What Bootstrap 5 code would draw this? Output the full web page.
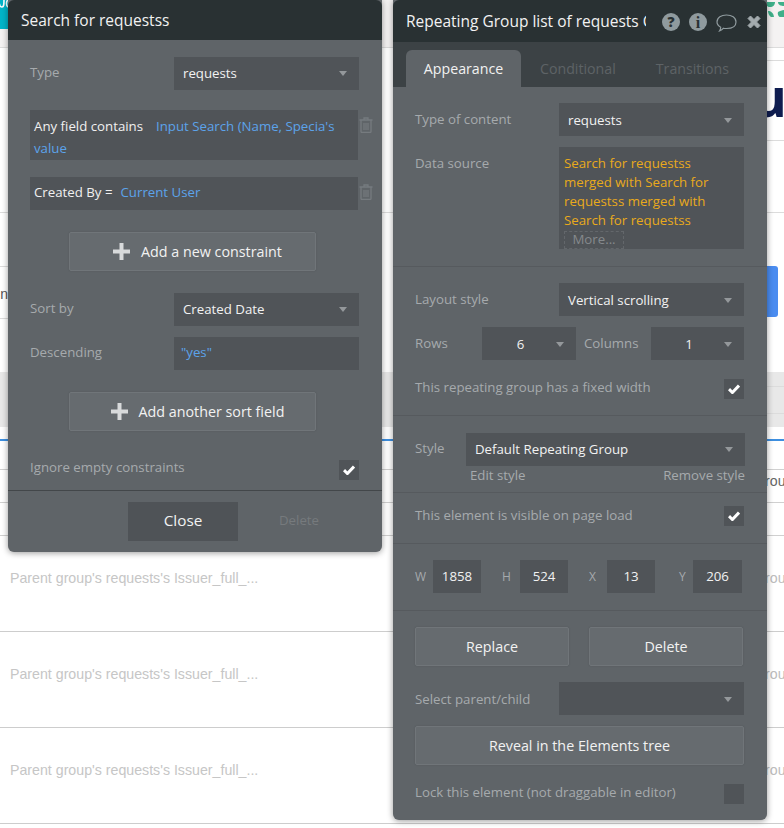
<!DOCTYPE html>
<html lang="en">
<head>
<meta charset="utf-8">
<title>Repeating Group editor</title>
<link href="https://cdn.jsdelivr.net/npm/bootstrap@5.3.0/dist/css/bootstrap.min.css" rel="stylesheet">
<style>
html,body{margin:0;height:828px;overflow:hidden;background:#fff}
body{font-family:"Open Sans",sans-serif;font-size:13.25px;color:#f0f0f0}
/* page behind */
.bk{position:relative;width:784px;height:828px;overflow:hidden;font-family:"Liberation Sans",sans-serif}
.bk-top{height:48px;background:#f4f2f2;border-bottom:1px solid #dcdcdc;overflow:hidden}
.bk-teal{width:8px;height:29px;background:#00b4c8}
.bk-green{width:18px;height:17px;top:0;right:0;overflow:hidden}
.bk-a{height:165px;border-bottom:1px solid #dcdcdc}
.bk-strip{width:17px;margin-left:auto}
.bk-l1{height:13px;border-bottom:1px solid #dcdcdc}
.bk-u{height:80px;border-bottom:1px solid #dcdcdc;color:#0e1c4f;font:700 54px/70px "Open Sans",sans-serif;overflow:hidden;white-space:nowrap;direction:rtl;padding-left:0}
.bk-u span{margin-right:-3px}
.bk-b{height:159px;padding-top:53px}
.bk-inp{width:8px;height:53px;border:1px solid #dcdcdc;border-width:1px 0;color:#555;font:14px/54px "Liberation Sans",sans-serif;overflow:hidden;direction:rtl}
.bk-blue{width:12px;height:51px;background:#4a8cf0;border-radius:0 3px 3px 0;margin-right:6px}
.bk-band{height:55px;background:#e8e8e8}
.bk-l2{height:15px;border-bottom:1px solid #dcdcdc}
.bk-l3{height:27px;border-bottom:1px solid #dcdcdc}
.bk-gap{height:12px}
.bk-bl{height:2px;background:#3d8fe0}
.bk-r1{height:29px;border-bottom:1px solid #d0d0d0}
.bk-r2{height:33px;border-bottom:1px solid #d0d0d0;white-space:nowrap;overflow:hidden;color:#555;font-size:14.2px;padding-top:1px}
.bk-r3{height:33px;border-bottom:1px solid #d0d0d0}
.bk-row{height:96px;border-bottom:1px solid #cdcdcd;padding-top:33px;white-space:nowrap;overflow:hidden;color:#c6c6c6;font-size:14.2px;line-height:18px}
.bk-lt{width:754px;padding-left:10px;flex:none}
.bk-r2 .bk-lt{color:transparent}
.bk-rt{color:#bcbcbc}
.bk-r2 .bk-rt{color:#666}
/* floating editor windows */
.pnl{position:absolute;top:0;width:374px;background:#5f6468;border-radius:0 0 6px 6px;box-shadow:0 1px 6px rgba(0,0,0,.4);overflow:hidden}
.pnl-s{left:8px;height:552px}
.pnl-r{left:393px;height:820px}
.hd{height:40px;background:#293133;display:flex;align-items:center;padding-left:13px;padding-top:2px;font-size:15.5px;color:#f2f2f2;border-radius:6px 6px 0 0}
.pnl-r .hd{height:42px;padding-top:0}
.ttl{width:240px;flex:none;overflow:hidden;white-space:nowrap;padding-top:2px}
.ics{margin-left:13px;flex:none}
.lbl{color:#a6aaad;line-height:18px}
.up1{margin-bottom:2px}.up2{margin-bottom:4px}.up3{margin-bottom:6px}
.fld{background:#505458;height:33px;padding:0 9px;display:flex;align-items:center;justify-content:space-between;white-space:nowrap;color:#f2f2f2}
.pnl-r .pr .fld,.pnl-r .pr-rows .fld{padding-top:2px}
.fld-y{padding-left:7px;padding-bottom:2px}
.car{width:0;height:0;border:4.5px solid transparent;border-top:5px solid #94989b;border-bottom:0;flex:none;margin-right:3px}
.w185{width:185px}
.s-body{padding:0 9px 0 22px}
.pair{width:329px;height:33px;display:flex;align-items:center;justify-content:space-between}
.crow{width:343px;display:flex;justify-content:space-between;align-items:flex-start}
.cbox{width:328px;background:#505458;padding:5px 4px;line-height:22px;height:50px}
.cbox-2{height:33px;padding:0 4px;line-height:31px;white-space:nowrap}
.blu{color:#5ca3ea}
.tr{margin-top:7px;flex:none}
.ml13{margin-left:13px}
.ml7{margin-left:8px}
.bt{background:#666b6f;border:1px solid #707579;border-radius:2px;color:#f2f2f2;font-size:14.3px;padding:0;display:flex;align-items:center;justify-content:center;box-shadow:0 0 2px rgba(0,0,0,.12)}
.bt:hover{background:#666b6f;color:#f2f2f2;border-color:#707579}
.bt-add{width:247px;height:39px;margin-left:39px;gap:11px;padding-left:10px}
.m11{margin-top:11px}.m16{margin-top:16px}.m17{margin-top:17px}.m19{margin-top:19px}.m20{margin-top:20px}.m22{margin-top:22px}.m29{margin-top:29px}
.chk-row{width:329px;height:20px;display:flex;align-items:center;justify-content:space-between}
.cb{width:20px;height:20px;background:#505458;display:flex;align-items:center;justify-content:center;flex:none}
.ft{margin-top:10px;border-top:1px solid #43474a;height:62px;padding:11px 0 0 120px;display:flex;align-items:flex-start}
.bt-close{width:110px;height:39px;background:#4f5357;border:0;color:#f2f2f2;font-size:15.3px;border-radius:0;padding:0 0 2px}
.bt-close:hover{background:#4f5357;color:#f2f2f2}
.del-off{margin-left:41px;margin-top:9px;color:#767a7d}
/* right panel */
.tabs{height:45px;background:#3c4245;padding:8px 0 0 13px;display:flex;align-items:flex-start;font-size:14.2px}
.tb{height:37px;line-height:37px;color:#5e6366;margin-left:35px}
.tb-t{margin-left:40px}
.tb-on{width:115px;background:#5f6468;border-radius:6px 6px 0 0;color:#f2f2f2;text-align:center;margin-left:0;margin-right:-16px}
.sec{padding:16px 23px 17px 22px;border-bottom:1px solid #565a5e;width:374px}
.sec-2{padding-bottom:16px}
.sec-3{padding:17px 22px 8px}
.sec-4{padding:13px 23px 17px 22px}
.sec-6{padding-bottom:17px;border:0}
.pr{width:329px;display:flex;justify-content:space-between;align-items:center;height:33px}
.dsrc{width:185px;height:102px;background:#505458;padding:7px 5px 0;color:#e9aa1c;line-height:19px}
.dsrc-row{width:329px;display:flex;justify-content:space-between;align-items:flex-start}
.lbl-top{margin-top:7px}
.more{width:60px;height:18px;border:1px dashed #63676b;color:#85898c;text-align:center;line-height:15px;margin-top:1px}
.w94{width:94px}.w93{width:93px}
.ml8{margin-left:8px}
.pr-rows{width:329px;height:33px;display:flex;align-items:center}
.col-l{width:67px}
.col-c{width:67px}
.val-c{flex:1;text-align:center;padding-right:6px}
.w279{width:279px;margin-left:15px}
.st-lbl{width:36px}
.st-links{width:330px;display:flex;justify-content:space-between;padding-left:55px;color:#a6aaad;line-height:18px}
.dims{width:329px;height:33px;display:flex;align-items:center;color:#a6aaad;font-size:12px}
.dim{height:33px;background:#505458;color:#f2f2f2;font-size:13.25px;display:flex;align-items:center;justify-content:center;flex:none}
.d48{width:48px}.d49{width:49px}
.dl-h{margin-left:21px;width:18px}
.dl-w{width:18px}
.dl-x{margin-left:21px;width:18px}
.dl-y{margin-left:24px;width:14px}
.bt-h{width:154px;height:39px}
.bt-w{width:329px;height:39px}
.pr-b{width:328px;display:flex;justify-content:space-between}
</style>
</head>
<body>
<div class="bk">
  <div class="bk-top d-flex"><div class="bk-teal"><svg width="8" height="29" viewBox="0 0 8 29"><path d="M-1 0c0 4 1 7 3 7s2-3 2-7M8 0C6 1 6 6 8 7" fill="none" stroke="#fff" stroke-width="1.6"/></svg></div></div>
  <div class="bk-green position-absolute">
    <svg width="18" height="17" viewBox="0 0 18 17" fill="#3fb08a"><path d="M0 0h9c0 3-2 5-5 5S0 3 0 0z"/><path d="M2 9c3 0 6 2 6 7-3 0-6-3-6-7z"/><path d="M12 0h6v4c-3 0-6-1-6-4z"/><path d="M18 8v8c-4 0-7-2-6-6 2-1 4-2 6-2z"/></svg>
  </div>
  <div class="bk-a"><div class="bk-strip"><div class="bk-l1"></div><div class="bk-u"><span>u</span></div></div></div>
  <div class="bk-b d-flex justify-content-between align-items-start"><div class="bk-inp">n</div><div class="bk-blue"></div></div>
  <div class="bk-band"><div class="bk-strip"><div class="bk-l2"></div><div class="bk-l3"></div></div></div>
  <div class="bk-gap"></div>
  <div class="bk-bl"></div>
  <div class="bk-r1"></div>
  <div class="bk-r2 d-flex"><div class="bk-lt">x</div><div class="bk-rt">Group</div></div>
  <div class="bk-r3"></div>
  <div class="bk-row d-flex"><div class="bk-lt">Parent group's requests's Issuer_full_...</div><div class="bk-rt">Group</div></div>
  <div class="bk-row d-flex"><div class="bk-lt">Parent group's requests's Issuer_full_...</div><div class="bk-rt">Group</div></div>
  <div class="bk-row d-flex"><div class="bk-lt">Parent group's requests's Issuer_full_...</div><div class="bk-rt">Group</div></div>
</div>

<div class="pnl pnl-s">
  <div class="hd">Search for requestss</div>
  <div class="s-body">
    <div class="pair m17"><span class="lbl up2">Type</span><div class="fld w185"><span>requests</span><i class="car"></i></div></div>
    <div class="crow m20">
      <div class="cbox"><span>Any field contains</span><span class="blu ml13">Input Search (Name, Specia's value</span></div>
      <svg class="tr" width="14" height="16" viewBox="0 0 14 16" fill="none" stroke="#767b7f" stroke-width="1.3"><path d="M.5 3h13M5 3V1h4v2M2 3v11.5a1 1 0 0 0 1 1h8a1 1 0 0 0 1-1V3"/><path d="M5 6v7M7 6v7M9 6v7" stroke-width="1.2"/></svg>
    </div>
    <div class="crow m17">
      <div class="cbox cbox-2"><span>Created By =</span><span class="blu ml7">Current User</span></div>
      <svg class="tr" width="14" height="16" viewBox="0 0 14 16" fill="none" stroke="#767b7f" stroke-width="1.3"><path d="M.5 3h13M5 3V1h4v2M2 3v11.5a1 1 0 0 0 1 1h8a1 1 0 0 0 1-1V3"/><path d="M5 6v7M7 6v7M9 6v7" stroke-width="1.2"/></svg>
    </div>
    <button class="btn bt bt-add m22" type="button"><svg width="17" height="17" viewBox="0 0 17 17"><path d="M6.500 0h4v6.500H17v4h-6.500V17h-4v-6.500H0v-4h6.500z" fill="#d8dadb"/></svg><span>Add a new constraint</span></button>
    <div class="pair m22"><span class="lbl up2">Sort by</span><div class="fld w185"><span>Created Date</span><i class="car"></i></div></div>
    <div class="pair m11"><span class="lbl up2">Descending</span><div class="fld w185 fld-y"><span class="blu">"yes"</span></div></div>
    <button class="btn bt bt-add m22" type="button"><svg width="17" height="17" viewBox="0 0 17 17"><path d="M6.500 0h4v6.500H17v4h-6.500V17h-4v-6.500H0v-4h6.500z" fill="#d8dadb"/></svg><span>Add another sort field</span></button>
    <div class="chk-row m29"><span class="lbl up3">Ignore empty constraints</span><div class="cb"><svg width="12" height="10" viewBox="0 0 12 10"><path d="M1 5.200l3.400 3.300L11 1.600" fill="none" stroke="#fff" stroke-width="3"/></svg></div></div>
  </div>
  <div class="ft"><button class="btn bt-close" type="button">Close</button><span class="del-off">Delete</span></div>
</div>

<div class="pnl pnl-r">
  <div class="hd">
    <div class="ttl">Repeating Group list of requests Copy</div>
    <div class="ics d-flex align-items-center">
      <svg width="110" height="24" viewBox="0 0 110 24"><g transform="translate(0 1)"><circle cx="12" cy="12" r="9" fill="#8f9a9e"/><text x="12" y="17" text-anchor="middle" font-family="Open Sans" font-weight="800" font-size="14" fill="#293133">?</text><circle cx="39" cy="12" r="9" fill="#8f9a9e"/><text x="39" y="17.500" text-anchor="middle" font-family="Liberation Serif" font-weight="700" font-size="16" fill="#293133">i</text><path d="M58 12c0-4.500 4.300-7 9.500-7s9.500 2.500 9.500 7-4.300 6.500-9.500 6.500c-1 0-2 0-3-.3-1 1.300-2.500 2.300-4 2.800 .8-1.300 1.200-2.500 1.200-3.700C59.500 16 58 14.300 58 12z" fill="none" stroke="#8f9a9e" stroke-width="1.200"/><path d="M89 7.500l2.500-2.500 3.500 3.500 3.500-3.500 2.500 2.500-3.500 3.500 3.500 3.500-2.500 2.500-3.500-3.500-3.500 3.500-2.500-2.500 3.500-3.500z" transform="translate(0 1)" fill="#a3abae" stroke="#a3abae" stroke-width="1"/></g></svg>
    </div>
  </div>
  <div class="tabs"><div class="tb tb-on">Appearance</div><div class="tb">Conditional</div><div class="tb tb-t">Transitions</div></div>

  <div class="sec">
    <div class="pr"><span class="lbl up1">Type of content</span><div class="fld w185"><span>requests</span><i class="car"></i></div></div>
    <div class="dsrc-row m11"><span class="lbl lbl-top">Data source</span>
      <div class="dsrc">Search for requestss<br>merged with Search for<br>requestss merged with<br>Search for requestss<div class="more">More...</div></div>
    </div>
  </div>

  <div class="sec sec-2">
    <div class="pr"><span class="lbl up1">Layout style</span><div class="fld w185"><span>Vertical scrolling</span><i class="car"></i></div></div>
    <div class="pr-rows m11"><span class="lbl col-l up1">Rows</span><div class="fld w94"><span class="val-c">6</span><i class="car"></i></div><span class="lbl ml8 col-c up1">Columns</span><div class="fld w93"><span class="val-c">1</span><i class="car"></i></div></div>
    <div class="chk-row m19"><span class="lbl up2">This repeating group has a fixed width</span><div class="cb"><svg width="12" height="10" viewBox="0 0 12 10"><path d="M1 5.200l3.400 3.300L11 1.600" fill="none" stroke="#fff" stroke-width="3"/></svg></div></div>
  </div>

  <div class="sec sec-3">
    <div class="d-flex align-items-center"><span class="lbl st-lbl up2">Style</span><div class="fld w279"><span>Default Repeating Group</span><i class="car"></i></div></div>
    <div class="st-links"><span>Edit style</span><span>Remove style</span></div>
  </div>

  <div class="sec sec-4">
    <div class="chk-row"><span class="lbl up1">This element is visible on page load</span><div class="cb"><svg width="12" height="10" viewBox="0 0 12 10"><path d="M1 5.200l3.400 3.300L11 1.600" fill="none" stroke="#fff" stroke-width="3"/></svg></div></div>
  </div>

  <div class="sec">
    <div class="dims"><span class="dl-w">W</span><div class="dim d48">1858</div><span class="dl-h">H</span><div class="dim d48">524</div><span class="dl-x">X</span><div class="dim d48">13</div><span class="dl-y">Y</span><div class="dim d49">206</div></div>
  </div>

  <div class="sec sec-6">
    <div class="pr-b"><button class="btn bt bt-h" type="button">Replace</button><button class="btn bt bt-h" type="button">Delete</button></div>
    <div class="pr m16"><span class="lbl">Select parent/child</span><div class="fld w185"><span></span><i class="car"></i></div></div>
    <button class="btn bt bt-w m11" type="button">Reveal in the Elements tree</button>
    <div class="chk-row m19"><span class="lbl up2">Lock this element (not draggable in editor)</span><div class="cb"></div></div>
  </div>
</div>
<script src="https://cdn.jsdelivr.net/npm/bootstrap@5.3.0/dist/js/bootstrap.bundle.min.js"></script>
</body>
</html>
